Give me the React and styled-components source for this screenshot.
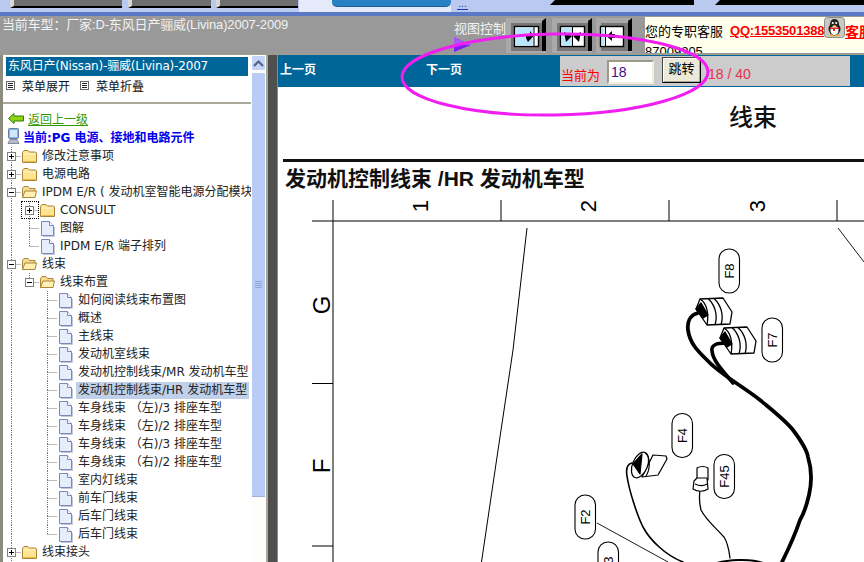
import React from 'react';
import styled, {createGlobalStyle} from 'styled-components';

const Global = createGlobalStyle`
    html, body {
        margin: 0;
        padding: 0;
        background: #fff;
    }
`;

const cjk = `"Noto Sans CJK SC", sans-serif`;
const ui = `"Liberation Sans", "Noto Sans CJK SC", sans-serif`;
const wide = `"DejaVu Sans", "Noto Sans CJK SC", sans-serif`;

const treeRows = [
    {joints: ['plus'], icon: 'closed', label: '修改注意事项'},
    {joints: ['plus'], icon: 'closed', label: '电源电路'},
    {joints: ['minus'], icon: 'open', label: 'IPDM E/R ( 发动机室智能电源分配模块'},
    {joints: ['line', 'plusTee'], icon: 'closed', label: 'CONSULT', focused: true},
    {joints: ['line', 'tee'], icon: 'doc', label: '图解'},
    {joints: ['line', 'corner'], icon: 'doc', label: 'IPDM E/R 端子排列'},
    {joints: ['minus'], icon: 'open', label: '线束'},
    {joints: ['line', 'minusCorner'], icon: 'open', label: '线束布置'},
    {joints: ['line', 'blank', 'tee'], icon: 'doc', label: '如何阅读线束布置图'},
    {joints: ['line', 'blank', 'tee'], icon: 'doc', label: '概述'},
    {joints: ['line', 'blank', 'tee'], icon: 'doc', label: '主线束'},
    {joints: ['line', 'blank', 'tee'], icon: 'doc', label: '发动机室线束'},
    {joints: ['line', 'blank', 'tee'], icon: 'doc', label: '发动机控制线束/MR 发动机车型'},
    {joints: ['line', 'blank', 'tee'], icon: 'doc', label: '发动机控制线束/HR 发动机车型', selected: true},
    {joints: ['line', 'blank', 'tee'], icon: 'doc', label: '车身线束 （左)/3 排座车型'},
    {joints: ['line', 'blank', 'tee'], icon: 'doc', label: '车身线束 （左)/2 排座车型'},
    {joints: ['line', 'blank', 'tee'], icon: 'doc', label: '车身线束 （右)/3 排座车型'},
    {joints: ['line', 'blank', 'tee'], icon: 'doc', label: '车身线束 （右)/2 排座车型'},
    {joints: ['line', 'blank', 'tee'], icon: 'doc', label: '室内灯线束'},
    {joints: ['line', 'blank', 'tee'], icon: 'doc', label: '前车门线束'},
    {joints: ['line', 'blank', 'tee'], icon: 'doc', label: '后车门线束'},
    {joints: ['line', 'blank', 'corner'], icon: 'doc', label: '后车门线束'},
    {joints: ['plus'], icon: 'closed', label: '线束接头'},
];

const Joint = ({type, focused}) => {
    const up = ['line', 'tee', 'corner', 'plus', 'minus', 'plusTee', 'minusCorner'].includes(type);
    const down = ['line', 'tee', 'plus', 'minus', 'plusTee'].includes(type);
    const right = type !== 'line' && type !== 'blank';
    const box = ['plus', 'minus', 'plusTee', 'minusCorner'].includes(type);
    const isPlus = type === 'plus' || type === 'plusTee';
    return (
        <JointCell $focused={focused}>
            <svg width="18" height="18" viewBox="0 0 18 18">
                {up && <path d="M8.5 0V9" stroke="#777" strokeDasharray="1 1" />}
                {down && <path d="M8.5 9V18" stroke="#777" strokeDasharray="1 1" />}
                {right && <path d="M8.5 9.5H18" stroke="#777" strokeDasharray="1 1" />}
                {box && (
                    <>
                        <rect x="4.5" y="5.5" width="8" height="8" fill="#fff" stroke="#808080" />
                        <path d="M6 9.5H11" stroke="#000" />
                        {isPlus && <path d="M8.5 7V12" stroke="#000" />}
                    </>
                )}
            </svg>
        </JointCell>
    );
};

const TreeIcon = ({kind}) => {
    if (kind === 'doc') {
        return (
            <IconSvg width="18" height="18" viewBox="0 0 18 18">
                <path d="M2.5 2.5H10.5L14.5 6.5V16.5H2.5Z" fill="#e6eefb" stroke="#7c86bd" />
                <path d="M10.5 2.5V6.5H14.5" fill="#fff" stroke="#7c86bd" />
                <path d="M15.5 8V17.5H4" fill="none" stroke="#c4c8d8" />
            </IconSvg>
        );
    }
    if (kind === 'open') {
        return (
            <IconSvg width="18" height="18" viewBox="0 0 18 18">
                <path d="M1.5 14.5V5.5L3 3.5H7L8.5 5.5H14V8" fill="#f6dc8c" stroke="#a8853a" />
                <path d="M1.5 14.5L4 8H15.5L14 14.5Z" fill="#fff0b4" stroke="#a8853a" />
            </IconSvg>
        );
    }
    return (
        <IconSvg width="18" height="18" viewBox="0 0 18 18">
            <path d="M1.5 15.5V5.5L3 3.5H7L8.5 5H14.5L15.5 6V15.5Z" fill="#fde48e" stroke="#a8853a" />
            <path d="M2.5 7H14.5" stroke="#fff6cf" />
            <path d="M2.5 14.5H14.5" stroke="#efb93f" />
        </IconSvg>
    );
};

const ViewIcon = ({mode}) => {
    const width = mode === 'narrow' ? 36 : 40;
    return (
        <svg width={width} height="35" viewBox={`0 0 ${width} 35`}>
            <rect width={width} height="35" fill="#a9a9a9" />
            <rect x="5" y="5" width={width - 9} height="28" fill="#777" />
            <path d={`M${width - 4} 3L${width} 0V33H${width - 4}Z`} fill="#000" />
            {mode === 'narrow' ? (
                <>
                    <rect x="4.5" y="8.5" width="23" height="20" fill="#fff" stroke="#000" strokeWidth="1.4" />
                    <rect x="5.5" y="9.5" width="3" height="18" fill="#b9e6fb" />
                    <path d="M9.5 9V28" stroke="#000" />
                    <path d="M19 16H16V13L10.500 18L16 23V20H19Z" fill="#000" />
                </>
            ) : (
                <>
                    <rect x="8.5" y="8.5" width="24" height="20" fill="#fff" stroke="#000" strokeWidth="1.4" />
                    {mode === 'right' && (
                        <>
                            <rect x="9.5" y="9.5" width="18" height="18" fill="#b9e6fb" />
                            <path d="M28 9V28" stroke="#000" />
                            <path d="M20 17H24V13L27.500 18L22 24L20 20Z" fill="#000" />
                        </>
                    )}
                    {mode === 'both' && (
                        <>
                            <rect x="9.5" y="9.5" width="11" height="18" fill="#b9e6fb" />
                            <path d="M20.500 9V28" stroke="#000" />
                            <path d="M12 14L20 18L14 24Z" fill="#000" />
                            <path d="M29 14L21 18L27 24Z" fill="#000" />
                        </>
                    )}
                </>
            )}
        </svg>
    );
};

const QqIcon = () => (
    <IconSvg width="21" height="21" viewBox="0 0 21 21">
        <rect x="0.5" y="0.5" width="20" height="20" rx="3" fill="#c9c9c4" stroke="#8e8e8a" />
        <ellipse cx="10.5" cy="12" rx="6" ry="6.5" fill="#222" />
        <ellipse cx="10.5" cy="7" rx="4.5" ry="5" fill="#222" />
        <ellipse cx="10.5" cy="13.5" rx="4" ry="4.5" fill="#fff" />
        <circle cx="8.8" cy="6" r="1.1" fill="#fff" />
        <circle cx="12.2" cy="6" r="1.1" fill="#fff" />
        <path d="M8.5 8.2H12.5L10.5 9.8Z" fill="#f5a81c" />
        <path d="M6 10.5H15V12H11V14H9V12H6Z" fill="#d92a1c" />
        <path d="M5.5 18.5H9.5M11.5 18.5H15.5" stroke="#f5a81c" strokeWidth="1.6" />
    </IconSvg>
);

const MenuBoxIcon = () => (
    <IconSvg width="9" height="9" viewBox="0 0 9 9">
        <rect x="0.5" y="0.5" width="8" height="8" fill="#fff" stroke="#666" />
        <path d="M2 2.5H7M2 4.5H7M2 6.5H7" stroke="#222" />
    </IconSvg>
);

const Pill = ({x, y, w = 20.5, h = 44, label}) => (
    <g>
        <rect x={x} y={y} width={w} height={h} rx="10" fill="#fff" stroke="#000" strokeWidth="1.1" />
        <text
            x={x + w / 2}
            y={y + h / 2}
            transform={`rotate(-90 ${x + w / 2} ${y + h / 2})`}
            textAnchor="middle"
            dominantBaseline="central"
            fontFamily='"Liberation Sans", sans-serif'
            fontSize="13"
        >
            {label}
        </text>
    </g>
);

const WireConnector = () => (
    <g stroke="#000" strokeWidth="1.3" fill="#fff" strokeLinejoin="round">
        <path d="M696 309L700 299L723 298L732 312L730 324L707 325Z" />
        <path d="M700 299C707 303 709 314 707 325" fill="none" />
        <path d="M708 298.500C715 305 718 315 715 325" fill="none" />
        <path d="M714 298.500C721 305 724 315 721 325" fill="none" />
        <path d="M696 309L701 303L708 315L703 318Z" fill="#000" />
    </g>
);

const HarnessDiagram = () => (
    <Diagram viewBox="278 195 586 367" width="586" height="367">
        <g stroke="#000" fill="none">
            <path d="M312 221H864" strokeWidth="1.2" />
            <path d="M333 200V562" strokeWidth="1" />
            <path d="M501 200V221M669 200V221M837 200V221" strokeWidth="1" />
            <path d="M312 383.500H333M312 546H333" strokeWidth="1.2" />
            <path d="M527 228L513 350L497 457L481.500 562" strokeWidth="1" />
            <path d="M838 228L864 262" strokeWidth="0.9" />
            <path d="M597 523L668 562" strokeWidth="0.9" />
        </g>
        <g fontFamily='"Liberation Sans", sans-serif' fontSize="22" textAnchor="middle" dominantBaseline="central">
            <text x="420" y="206" transform="rotate(-90 420 206)">1</text>
            <text x="588" y="206" transform="rotate(-90 588 206)">2</text>
            <text x="757" y="206" transform="rotate(-90 757 206)">3</text>
            <text x="321" y="305" fontSize="24" transform="rotate(-90 321 305)">G</text>
            <text x="321" y="466" fontSize="24" transform="rotate(-90 321 466)">F</text>
        </g>
        <g fill="none" stroke="#000" strokeLinecap="round">
            <path d="M698 313C690 315 687 322 688 330C690 345 700 353 710 363C722 375 745 388 760 400C772 410 785 420 793 430C802 442 807 450 808 457C812 470 812 482 809 495C806 508 803 515 800 520C795 535 788 550 782 562" strokeWidth="3.8" />
            <path d="M725 343C717 343 711 345 712 351C713 360 720 368 733 383" strokeWidth="3.6" />
            <path d="M632 463C627 464 626 470 627 476C629 490 637 515 643 527C650 540 665 555 683 562" strokeWidth="1.6" />
            <path d="M700 490C699 498 699 503 701 510C706 520 716 528 724 537C728 543 729 550 730 558" strokeWidth="1.3" />
            <path d="M717 563C727 560 750 558 763 563" strokeWidth="2" />
        </g>
        <WireConnector />
        <g transform="translate(24 29)">
            <WireConnector />
        </g>
        <g stroke="#000" strokeWidth="1.2" fill="#fff" strokeLinejoin="round">
            <path d="M653 455L666 456L667 459L658 475L642 477Z" />
            <ellipse cx="640" cy="465" rx="7.500" ry="13.500" transform="rotate(22 640 465)" />
            <path d="M645 453C650 456 651 468 646 476" fill="none" />
            <path d="M633 464L642 454L640 474Z" fill="#000" />
            <path d="M697 468C700 466 705 466 708 468L708 480H697Z" />
            <path d="M694 481L697 478H707L708 489C704 492 697 492 693 489Z" />
            <path d="M695 484C699 486 704 486 707 484" fill="none" />
        </g>
        <Pill x={719} y={249} label="F8" />
        <Pill x={762} y={318} label="F7" />
        <Pill x={672} y={413.500} label="F4" />
        <Pill x={714} y={454.500} label="F45" />
        <Pill x={575} y={495} label="F2" />
        <Pill x={598} y={542} label="F3" />
    </Diagram>
);

const App = () => (
    <Page>
        <Global />
        <TopStrip>
            <StripTab $width={112} $left={10} />
            <StripTab $width={83} $left={6} />
            <StripTab $width={82} $left={5} />
            <StripGlow>
                <GlowButton />
            </StripGlow>
            <StripLink>...</StripLink>
            <StripBar $left={82} $width={144} />
            <StripBar $left={21} $width={149} />
        </TopStrip>
        <Header>
            <CarModel>当前车型：厂家:D-东风日产骊威(Livina)2007-2009</CarModel>
            <ViewLabel>
                <span>视图控制</span>
                <svg width="17" height="15" viewBox="0 0 17 15">
                    <path d="M0 0L17 8L0 15Z" fill="#7a1ff0" />
                    <path d="M0 0L17 8H0Z" fill="#a45cf5" />
                </svg>
            </ViewLabel>
            <ViewButton $gap={0}><ViewIcon mode="right" /></ViewButton>
            <ViewButton $gap={6}><ViewIcon mode="both" /></ViewButton>
            <ViewButton $gap={4}><ViewIcon mode="narrow" /></ViewButton>
            <ServiceBox>
                <ServiceLine>
                    <ServiceLabel>您的专职客服</ServiceLabel>
                    <QqLink>QQ:1553501388</QqLink>
                    <QqIcon />
                    <ServiceName>客服</ServiceName>
                </ServiceLine>
                <ServicePhone>87009205</ServicePhone>
            </ServiceBox>
        </Header>
        <Main>
            <Sidebar>
                <SideBody>
                    <SideTitle>东风日产(Nissan)-骊威(Livina)-2007</SideTitle>
                    <MenuRow>
                        <MenuBoxIcon />
                        <MenuText>菜单展开</MenuText>
                        <MenuBoxIcon />
                        <MenuText>菜单折叠</MenuText>
                    </MenuRow>
                    <SideRule />
                    <BackRow>
                        <svg width="16" height="11" viewBox="0 0 16 11">
                            <path d="M0.500 5.500L6 0.500V3H15.500V8H6V10.500Z" fill="#8fd40f" stroke="#2f7a06" />
                        </svg>
                        <BackLink>返回上一级</BackLink>
                    </BackRow>
                    <CurrentRow>
                        <svg width="13" height="17" viewBox="0 0 13 17">
                            <rect x="1.500" y="0.500" width="10" height="10" rx="1" fill="#7fb5ea" stroke="#6b7fa3" />
                            <rect x="3" y="2" width="7" height="7" fill="#cfe6fb" />
                            <path d="M3 11.500H10L12 15.500H1Z" fill="#b8bcc8" stroke="#858a99" />
                        </svg>
                        <CurrentText>当前:PG 电源、接地和电路元件</CurrentText>
                    </CurrentRow>
                    <Tree>
                        {treeRows.map((row, index) => (
                            <TreeRow key={index}>
                                {row.joints.map((joint, i) => (
                                    <Joint key={i} type={joint} focused={row.focused && i === row.joints.length - 1} />
                                ))}
                                <TreeIcon kind={row.icon} />
                                <TreeLabel $selected={row.selected}>{row.label}</TreeLabel>
                            </TreeRow>
                        ))}
                    </Tree>
                </SideBody>
                <Scrollbar>
                    <ScrollButton>
                        <svg width="11" height="7" viewBox="0 0 11 7">
                            <path d="M1 6L5.500 1.500L10 6" fill="none" stroke="#4d6185" strokeWidth="2" />
                        </svg>
                    </ScrollButton>
                    <ScrollThumb>
                        <svg width="7" height="7" viewBox="0 0 7 7">
                            <path d="M0 0.500H7M0 2.500H7M0 4.500H7M0 6.500H7" stroke="#8fa6d8" />
                        </svg>
                    </ScrollThumb>
                </Scrollbar>
            </Sidebar>
            <Splitter />
            <Reader>
                <Toolbar>
                    <PageLink $width={146}>上一页</PageLink>
                    <PageLink $width={134}>下一页</PageLink>
                    <Pager>
                        <PagerLabel>当前为</PagerLabel>
                        <PageInput defaultValue="18" />
                        <JumpButton>跳转</JumpButton>
                        <PageCount>18 / 40</PageCount>
                    </Pager>
                </Toolbar>
                <Sheet>
                    <SheetTitle>线束</SheetTitle>
                    <SheetHeading>发动机控制线束 /HR 发动机车型</SheetHeading>
                    <HarnessDiagram />
                </Sheet>
            </Reader>
        </Main>
        <Highlight width="864" height="562" viewBox="0 0 864 562">
            <ellipse cx="555" cy="74.500" rx="153" ry="40.500" transform="rotate(-1 555 74.500)" fill="none" stroke="#f01ef0" strokeWidth="3" />
        </Highlight>
    </Page>
);

const Page = styled.div`
    position: relative;
    width: 864px;
    height: 562px;
    overflow: hidden;
    display: flex;
    flex-direction: column;
    font-family: ${cjk};
    font-size: 12px;
    color: #111;
`;

const IconSvg = styled.svg`
    flex: none;
`;

const TopStrip = styled.div`
    height: 16px;
    flex: none;
    display: flex;
    align-items: flex-start;
    box-sizing: border-box;
    border-bottom: 4px solid #5a78c4;
    background: #b9c9ef;
`;

const StripTab = styled.div`
    width: ${p => p.$width}px;
    margin-left: ${p => p.$left}px;
    height: 8px;
    box-sizing: border-box;
    background: #6f6f6f;
    border-bottom: 2px solid #000;
    border-left: 4px solid #d8d8d8;
`;

const StripGlow = styled.div`
    width: 152px;
    height: 12px;
    margin-left: 1px;
    padding-left: 33px;
    box-sizing: border-box;
    background: #e4eafa;
`;

const GlowButton = styled.div`
    width: 119px;
    height: 6px;
    background: #2a80c4;
    border-radius: 0 0 5px 5px;
    border-bottom: 1px solid #1c5f9a;
`;

const StripLink = styled.span`
    margin-left: 6px;
    width: 11px;
    height: 9px;
    font-family: ${ui};
    font-size: 10px;
    line-height: 7px;
    text-align: center;
    color: #2030c0;
    border-bottom: 1px solid #2030c0;
`;

const StripBar = styled.div`
    width: ${p => p.$width}px;
    margin-left: ${p => p.$left}px;
    height: 5px;
    background: #000;
    clip-path: polygon(5px 0, 100% 0, 100% 100%, 0 100%);
`;

const Header = styled.div`
    height: 38px;
    flex: none;
    display: flex;
    align-items: flex-start;
    background: #999;
`;

const CarModel = styled.div`
    width: 452px;
    flex: none;
    padding: 1px 0 0 2px;
    box-sizing: border-box;
    font-family: ${ui};
    font-size: 13px;
    letter-spacing: -0.15px;
    line-height: 16px;
    color: #f2f2f2;
    white-space: nowrap;
`;

const ViewLabel = styled.div`
    width: 52px;
    margin-left: 2px;
    flex: none;
    padding-top: 4px;
    display: flex;
    flex-direction: column;
    gap: 2px;
    font-size: 13px;
    line-height: 15px;
    color: #f4f4f4;
`;

const ViewButton = styled.div`
    margin: 2px 0 0 ${p => p.$gap}px;
    height: 35px;
    flex: none;
    line-height: 0;
`;

const ServiceBox = styled.div`
    margin: 1px 0 0 auto;
    width: 219px;
    flex: none;
    height: 36px;
    overflow: hidden;
    background: #ffffee;
    white-space: nowrap;
`;

const ServiceLine = styled.div`
    height: 21px;
    display: flex;
    align-items: flex-start;
`;

const ServiceLabel = styled.span`
    width: 85px;
    flex: none;
    padding-top: 6px;
    font-size: 13px;
    line-height: 16px;
    color: #000;
`;

const QqLink = styled.span`
    width: 94px;
    flex: none;
    margin-top: 6px;
    font-family: ${ui};
    font-size: 13px;
    font-weight: 700;
    letter-spacing: -0.2px;
    line-height: 16px;
    color: #f00;
    text-decoration: underline;
`;

const ServiceName = styled(QqLink)`
    font-family: ${cjk};
    font-size: 14px;
    letter-spacing: 0;
    width: 19px;
    overflow: hidden;
`;

const ServicePhone = styled.div`
    margin-top: 6px;
    font-family: ${ui};
    font-size: 13px;
    line-height: 16px;
    color: #000;
`;

const Main = styled.div`
    flex: 1;
    min-height: 0;
    display: flex;
    border-top: 1px solid #a09f8e;
`;

const Sidebar = styled.div`
    width: 268px;
    flex: none;
    box-sizing: border-box;
    display: flex;
    background: #fff;
    border-left: 3px solid #8c8b7e;
    border-right: 2px solid #a8a798;
`;

const SideBody = styled.div`
    width: 248px;
    flex: none;
    overflow: hidden;
    padding-top: 2px;
`;

const SideTitle = styled.div`
    margin: 0 3px;
    height: 19px;
    padding-left: 2px;
    font-family: ${wide};
    font-size: 12px;
    letter-spacing: -0.18px;
    line-height: 19px;
    color: #fff;
    background: #006699;
    white-space: nowrap;
    overflow: hidden;
`;

const MenuRow = styled.div`
    height: 20px;
    padding: 0 0 0 3px;
    margin-top: -1px;
    display: flex;
    align-items: center;
`;

const MenuText = styled.span`
    width: 58px;
    margin-left: 7px;
    font-size: 12px;
`;

const SideRule = styled.div`
    height: 2px;
    margin-top: 7px;
    background: #aca899;
`;

const BackRow = styled.div`
    height: 18px;
    margin-top: 5px;
    padding-left: 5px;
    display: flex;
    align-items: center;
    gap: 4px;
`;

const BackLink = styled.span`
    font-size: 12px;
    color: #339900;
    text-decoration: underline;
`;

const CurrentRow = styled.div`
    height: 18px;
    padding-left: 4px;
    display: flex;
    align-items: center;
    gap: 3px;
`;

const CurrentText = styled.span`
    font-family: ${wide};
    font-size: 12px;
    font-weight: 700;
    color: #0000ee;
    white-space: nowrap;
`;

const Tree = styled.div`
    margin-top: 2px;
    display: flex;
    flex-direction: column;
`;

const TreeRow = styled.div`
    height: 18px;
    display: flex;
    align-items: center;
`;

const JointCell = styled.span`
    width: 18px;
    height: 18px;
    flex: none;
    line-height: 0;
    box-sizing: border-box;
    outline: ${p => (p.$focused ? '1px dotted #000' : 'none')};
    outline-offset: -1px;
`;

const TreeLabel = styled.span`
    height: 17px;
    margin-left: ${p => (p.$selected ? '1px' : '3px')};
    padding: 0 ${p => (p.$selected ? '2px' : '0')};
    font-family: ${wide};
    font-size: 12px;
    line-height: 17px;
    color: #222;
    white-space: nowrap;
    background: ${p => (p.$selected ? '#c0d0e8' : 'transparent')};
`;

const Scrollbar = styled.div`
    flex: 1;
    display: flex;
    flex-direction: column;
    gap: 1px;
    background: #fdfdfd;
`;

const ScrollButton = styled.div`
    height: 16px;
    display: flex;
    align-items: center;
    justify-content: center;
    box-sizing: border-box;
    border: 1px solid #fff;
    border-radius: 2px;
    background: #c4d3f6;
`;

const ScrollThumb = styled.div`
    height: 425px;
    display: flex;
    align-items: center;
    justify-content: center;
    box-sizing: border-box;
    border: 1px solid #fff;
    border-bottom-color: #9fb0d8;
    border-radius: 2px;
    background: #b9ccf5;
`;

const Splitter = styled.div`
    width: 9px;
    flex: none;
    background: #4f4f4f;
`;

const Reader = styled.div`
    flex: 1;
    min-width: 0;
    display: flex;
    flex-direction: column;
    overflow: hidden;
    background: #fff;
    border-left: 1px solid #8c8b7e;
`;

const Toolbar = styled.div`
    height: 32px;
    flex: none;
    padding-left: 2px;
    display: flex;
    align-items: center;
    background: #006699;
`;

const PageLink = styled.span`
    width: ${p => p.$width}px;
    flex: none;
    margin-bottom: 5px;
    font-size: 12px;
    font-weight: 700;
    color: #fff;
`;

const Pager = styled.div`
    width: 290px;
    flex: none;
    height: 30px;
    display: flex;
    align-items: flex-start;
    background: #ccc;
`;

const PagerLabel = styled.span`
    width: 47px;
    box-sizing: border-box;
    padding: 11px 0 0 1px;
    font-size: 13px;
    line-height: 16px;
    color: #f00;
`;

const PageInput = styled.input`
    width: 47px;
    height: 24px;
    margin-top: 4px;
    padding: 0 0 0 2px;
    box-sizing: border-box;
    font-family: ${ui};
    font-size: 14px;
    color: #3a0e8c;
    background: #fff;
    border: 2px solid;
    border-color: #9d9a8a #f1efe2 #f1efe2 #9d9a8a;
    outline: none;
`;

const JumpButton = styled.button`
    width: 39px;
    height: 26px;
    margin: 1px 0 0 8px;
    padding: 0 0 5px;
    font-family: ${cjk};
    font-size: 13px;
    color: #000;
    background: #ece9d8;
    border: 1px solid #000;
    border-top-color: #444;
    border-left-color: #444;
    box-shadow: inset 1px 1px 0 #fff, inset -1px -1px 0 #aca899;
`;

const PageCount = styled.span`
    margin-left: 7px;
    padding-top: 10px;
    font-family: ${ui};
    font-size: 14px;
    line-height: 16px;
    color: #e83050;
`;

const Sheet = styled.div`
    width: 950px;
    flex: none;
`;

const SheetTitle = styled.div`
    height: 75px;
    box-sizing: border-box;
    padding: 12px 5px 0 0;
    margin-left: 5px;
    text-align: center;
    font-size: 24px;
    font-weight: 500;
    line-height: 34px;
    color: #111;
    border-bottom: 3px solid #111;
`;

const SheetHeading = styled.div`
    height: 33px;
    box-sizing: border-box;
    padding: 2px 0 0 7px;
    font-family: ${ui};
    font-size: 21px;
    font-weight: 700;
    line-height: 30px;
    color: #111;
    white-space: nowrap;
`;

const Diagram = styled.svg`
    display: block;
`;

const Highlight = styled.svg`
    position: absolute;
    left: 0;
    top: 0;
    pointer-events: none;
`;

export default App;
